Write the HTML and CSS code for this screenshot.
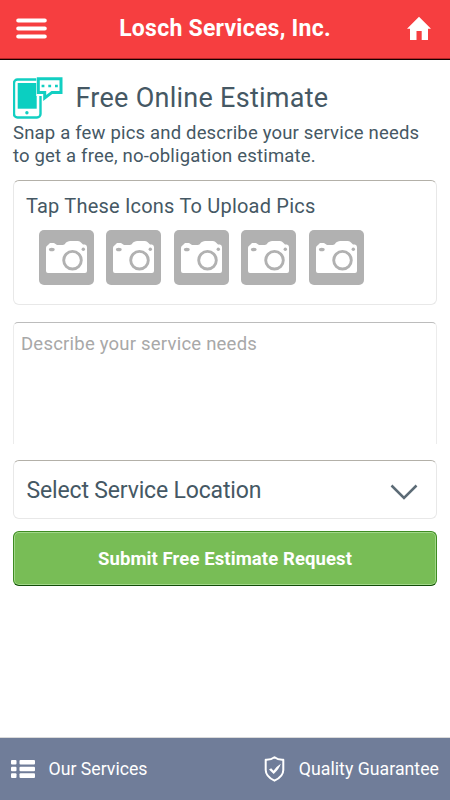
FILE: index.html
```html
<!DOCTYPE html>
<html lang="en">
<head>
<meta charset="utf-8">
<title>Losch Services, Inc.</title>
<link rel="stylesheet" href="styles.css">
</head>
<body>
<svg class="defs" width="0" height="0">
  <symbol id="camera" viewBox="0 0 55 55">
    <path fill="#fff" d="M7 18Q7 16 9 15L11 13H15L18 15H24Q26 14.500 27 12.500Q29 11 31 11H39Q41 11 42 12.500L44 14.500H46Q48 15 48 17V41Q48 43 46 43H9Q7 43 7 41Z"/>
    <ellipse cx="12.800" cy="19.500" rx="2.900" ry="1.800" fill="#b1b1b1"/>
    <circle cx="44.300" cy="19.300" r="1.700" fill="#b1b1b1"/>
    <circle cx="33.500" cy="30.200" r="8.800" fill="#fff" stroke="#b1b1b1" stroke-width="2.900"/>
  </symbol>
</svg>
<header class="top">
  <button class="icon-btn" aria-label="Menu">
    <svg width="31" height="22" viewBox="0 0 31 22"><path d="M2.200 3.500H28.800M2.200 11.500H28.800M2.200 19.400H28.800" stroke="#fff" stroke-width="4" stroke-linecap="round"/></svg>
  </button>
  <h1>Losch Services, Inc.</h1>
  <a class="icon-btn" aria-label="Home">
    <svg width="26" height="24" viewBox="0 0 26 24"><path d="M13 .8L25 12.700H22V24H15.700V15H10.500V24H4V12.700H1Z" fill="#fff"/></svg>
  </a>
</header>
<main>
  <div class="heading">
    <svg width="52" height="44" viewBox="0 0 52 44">
      <rect x="1" y="3.500" width="26.500" height="38" rx="3.500" fill="none" stroke="#12cfc2" stroke-width="2.400"/>
      <rect x="4.700" y="7" width="19" height="25.700" fill="#0bcfc1"/>
      <circle cx="13.900" cy="36.700" r="1.700" fill="#12cfc2"/>
      <path d="M23.300 .5H52V22H41.500L31 31H30V20H23.300Z" fill="#fff"/>
      <path d="M25.300 2.800H48V16.400H39L31.700 22V16.400H25.300Z" fill="#fff" stroke="#12cfc2" stroke-width="3"/>
      <path d="M28.600 10h2.800M35.300 10h2.800M42 10h2.800" stroke="#12cfc2" stroke-width="2.600"/>
    </svg>
    <h2>Free Online Estimate</h2>
  </div>
  <p class="intro">Snap a few pics and describe your service needs<br>to get a free, no-obligation estimate.</p>
  <section class="box upload">
    <h3>Tap These Icons To Upload Pics</h3>
    <div class="pics">
      <svg class="pic"><use href="#camera"/></svg>
      <svg class="pic"><use href="#camera"/></svg>
      <svg class="pic"><use href="#camera"/></svg>
      <svg class="pic"><use href="#camera"/></svg>
      <svg class="pic"><use href="#camera"/></svg>
    </div>
  </section>
  <div class="needs"><span>Describe your service needs</span></div>
  <div class="box select">
    <span>Select Service Location</span>
    <svg width="28" height="17" viewBox="0 0 28 17"><path d="M1.500 1.500L14 14L26.500 1.500" fill="none" stroke="#5c6b76" stroke-width="2.500"/></svg>
  </div>
  <button class="submit"><span>Submit Free Estimate Request</span></button>
</main>
<footer>
  <a class="services">
    <svg width="25" height="18" viewBox="0 0 25 18" fill="#fff"><rect width="5.500" height="4.600" rx="1"/><rect x="8.500" width="15.500" height="4.600" rx="1"/><rect y="6.700" width="5.500" height="4.600" rx="1"/><rect x="8.500" y="6.700" width="15.500" height="4.600" rx="1"/><rect y="13.300" width="5.500" height="4.600" rx="1"/><rect x="8.500" y="13.300" width="15.500" height="4.600" rx="1"/></svg>
    <span>Our Services</span>
  </a>
  <a class="quality">
    <svg width="21" height="26" viewBox="0 0 21 26"><path d="M10.500 1.300Q14 4 19.300 3.700V14Q19.300 20.500 10.500 24.700Q1.700 20.500 1.700 14V3.700Q7 4 10.500 1.300Z" fill="none" stroke="#fff" stroke-width="2" stroke-linejoin="round"/><path d="M5 13.500L7.200 12.300L9.500 14.700Q12.500 10.500 16.800 7.800Q15.300 13 9.700 18Z" fill="#fff"/></svg>
    <span>Quality Guarantee</span>
  </a>
</footer>
</body>
</html>
```

FILE: styles.css
```css
* { box-sizing: border-box; }
body {
  margin: 0;
  height: 800px;
  display: flex;
  flex-direction: column;
  background: #fff;
  color: #455864;
  font-family: Roboto, "Liberation Sans", sans-serif;
  overflow: hidden;
}
h1, h2, h3, p { margin: 0; font-weight: 400; white-space: nowrap; }
svg { display: block; flex: none; }
.defs { position: absolute; }
button { padding: 0; border: 0; background: none; font-family: inherit; }
.top {
  height: 60px;
  padding: 0 18px 3px 16px;
  display: flex;
  align-items: center;
  justify-content: space-between;
  background: #f63e40;
  border-bottom: 1px solid #180000;
  box-shadow: inset 0 -1px #b52527;
}
.top h1 { margin-right: 3px; color: #fff; font-size: 23px; font-weight: 700; letter-spacing: 0.25px; }
main { flex: 1; padding: 0 13px; }
.heading { display: flex; margin-top: 16px; height: 46px; }
.heading h2 { margin: 6px 0 0 10.5px; font-size: 27px; line-height: 32px; letter-spacing: 0.27px; }
.intro { font-size: 18.5px; line-height: 23px; letter-spacing: 0.18px; }
.box {
  border: 1px solid #e8e8e8;
  border-top-color: #b3b0a8;
  border-radius: 6px;
}
.upload { height: 125px; margin-top: 12px; padding: 14px 12px; }
.upload h3 { font-size: 20px; line-height: 22px; letter-spacing: 0.2px; }
.pics { display: flex; gap: 12.4px; margin: 13px 0 0 13px; }
.pic { width: 55px; height: 55px; background: #b1b1b1; border-radius: 5px; }
.needs {
  height: 122px;
  margin-top: 17px;
  padding: 10px 7px;
  border: 1px solid #ececec;
  border-top-color: #bcbcbc;
  border-bottom: 0;
  border-radius: 5px 5px 0 0;
  color: #a8a8a8;
  font-size: 18.5px;
  line-height: 22px;
  letter-spacing: 0.22px;
}
.select {
  height: 59px;
  margin-top: 16px;
  padding: 0 18px 0 12.5px;
  display: flex;
  align-items: center;
  justify-content: space-between;
  font-size: 23px;
  letter-spacing: -0.16px;
}
.select span { margin-top: 1px; }
.select svg { margin-top: 5px; }
.submit {
  display: block;
  width: 100%;
  height: 55px;
  margin-top: 12px;
  border: 1px solid #3e8c22;
  border-bottom-color: #124d08;
  border-radius: 6px;
  background: #78bd56;
  box-shadow: inset 0 0 0 1px #a2d78a;
  color: #fff;
  font-size: 18.5px;
  font-weight: 700;
  letter-spacing: 0.1px;
}
footer {
  height: 62px;
  padding: 0 11px 0 10.5px;
  display: flex;
  justify-content: space-between;
  background: #707d99;
  box-shadow: 0 -1px #dadada;
  color: #fff;
  font-size: 17.7px;
}
footer a { display: flex; align-items: center; gap: 13px; }
footer .quality { gap: 14px; letter-spacing: 0.03px; }
footer span { margin-top: -1px; }
```
